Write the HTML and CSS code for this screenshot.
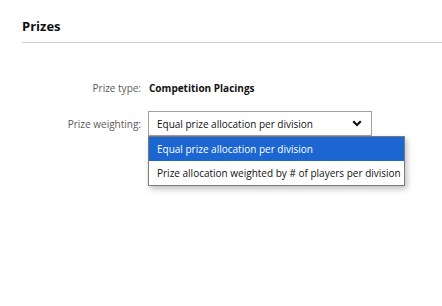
FILE: index.html
```html
<!DOCTYPE html>
<html>
<head>
<meta charset="utf-8">
<link rel="stylesheet" href="styles.css">
</head>
<body>
<div class="panel">
  <h2 class="title">Prizes</h2>
  <div class="form">
    <div class="label">Prize type:</div>
    <div class="value">Competition Placings</div>
    <div class="label">Prize weighting:</div>
    <div class="select-wrap">
      <div class="select">
        <span>Equal prize allocation per division</span>
        <svg class="chev" width="10" height="7" viewBox="0 0 10 7"><path d="M1.2 1.2 L5 5 L8.8 1.2" fill="none" stroke="#111" stroke-width="2.2"/></svg>
      </div>
      <ul class="menu">
        <li class="opt active">Equal prize allocation per division</li>
        <li class="opt">Prize allocation weighted by # of players per division</li>
      </ul>
    </div>
  </div>
</div>
</body>
</html>
```
FILE: styles.css
```css
html, body { margin: 0; padding: 0; background: #fff; }
body { font-family: "Open Sans", sans-serif; color: #222; width: 442px; height: 306px; overflow: hidden; }
.panel { padding-left: 22px; }
.title { margin: 0; padding-top: 17px; height: 25px; box-sizing: content-box; font-size: 13px; font-weight: 700; line-height: 18px; color: #111; border-bottom: 1px solid #cfcfcf; }
.form { display: grid; grid-template-columns: 119px auto; column-gap: 7px; row-gap: 13px; margin-top: 35px; align-items: center; }
.label { text-align: right; font-size: 10px; color: #5a5a5a; }
.value { font-size: 10px; font-weight: 700; color: #111; height: 20px; line-height: 20px; padding-left: 1px; }
.select-wrap { position: relative; width: 224px; }
.select { box-sizing: border-box; height: 25px; border: 1px solid #a0a0a0; display: flex; align-items: center; justify-content: space-between; padding: 0 9px 0 8px; font-size: 10px; color: #111; background: #fff; }
.chev { display: block; }
.menu { position: absolute; left: 0; top: 25px; margin: 0; padding: 0; list-style: none; border: 1px solid #7a7a7a; background: #fff; box-shadow: 2px 3px 6px rgba(0,0,0,0.25); white-space: nowrap; z-index: 2; }
.opt { height: 24px; line-height: 24px; padding: 0 3px 0 8px; font-size: 10px; color: #111; }
.opt.active { background: #1b66d1; color: #fff; }
```
